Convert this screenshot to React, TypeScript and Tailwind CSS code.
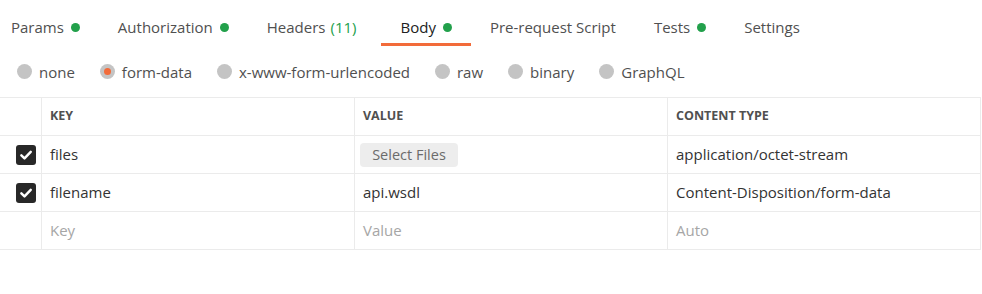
import React from "react";

const tabs = [
  { label: "Params", dot: true },
  { label: "Authorization", dot: true },
  { label: "Headers", count: "(11)" },
  { label: "Body", dot: true, active: true },
  { label: "Pre-request Script" },
  { label: "Tests", dot: true },
  { label: "Settings" },
];

const bodyTypes = ["none", "form-data", "x-www-form-urlencoded", "raw", "binary", "GraphQL"];

function Checkbox() {
  return (
    <div className="w-[20px] h-[20px] rounded-[3px] bg-[#282828] flex items-center justify-center">
      <svg width="14" height="14" viewBox="0 0 13 13" fill="none">
        <path d="M2.2 6.8l2.9 2.8L10.9 3.6" stroke="#fff" strokeWidth="2.3" strokeLinecap="round" strokeLinejoin="round" />
      </svg>
    </div>
  );
}

function Cell({ children, first }: { children?: React.ReactNode; first?: boolean }) {
  return (
    <div
      className={`h-[38px] border-b border-r border-[#ebebeb] flex items-center ${
        first ? "pl-[16px]" : "px-[8px]"
      }`}
    >
      {children}
    </div>
  );
}

function Head({ children }: { children: React.ReactNode }) {
  return <span className="text-[12.5px] font-bold text-[#505050]">{children}</span>;
}

export default function App() {
  return (
    <div className="w-[982px] h-[294px] bg-white text-[15px] text-[#505050]" style={{ fontFamily: '"Open Sans", sans-serif' }}>
      <div className="flex h-[46px]">
        {tabs.map((t, i) => (
          <div
            key={t.label}
            className={`h-[46px] pt-[16px] border-b-[3px] flex items-start leading-[22px] ${
              i === 0 ? "pl-[11px] pr-[19px]" : "px-[19px]"
            } ${t.active ? "border-[#f26b3a] text-[#212121]" : "border-transparent"} ${t.count ? "pr-[25px]" : ""}`}
          >
            <span>{t.label}</span>
            {t.count && <span className="ml-[5px] text-[#22a04b]">{t.count}</span>}
            {t.dot && <span className="ml-[7px] mt-[7px] w-[9px] h-[9px] rounded-full bg-[#22a04b]" />}
          </div>
        ))}
      </div>

      <div className="h-[51px] flex items-center pl-[17px] gap-[25px]">
        {bodyTypes.map((b) => (
          <div key={b} className="flex items-center gap-[7px] leading-[22px]">
            <span className="w-[15px] h-[15px] rounded-full bg-[#c4c4c4] flex items-center justify-center">
              {b === "form-data" && <span className="w-[7px] h-[7px] rounded-full bg-[#f26b3a]" />}
            </span>
            <span>{b}</span>
          </div>
        ))}
      </div>

      <div className="grid grid-cols-[42px_313px_313px_313px] border-t border-[#ebebeb] w-[981px] text-[#333]">
        <Cell first />
        <Cell>
          <Head>KEY</Head>
        </Cell>
        <Cell>
          <Head>VALUE</Head>
        </Cell>
        <Cell>
          <Head>CONTENT TYPE</Head>
        </Cell>

        <Cell first>
          <Checkbox />
        </Cell>
        <Cell>files</Cell>
        <Cell>
          <button className="ml-[-3px] w-[98px] h-[24px] rounded-[4px] bg-[#ededed] text-[#6b6b6b] text-[14.5px] leading-[24px]">
            Select Files
          </button>
        </Cell>
        <Cell>application/octet-stream</Cell>

        <Cell first>
          <Checkbox />
        </Cell>
        <Cell>filename</Cell>
        <Cell>api.wsdl</Cell>
        <Cell>Content-Disposition/form-data</Cell>

        <Cell first />
        <Cell>
          <span className="text-[#a6a6a6]">Key</span>
        </Cell>
        <Cell>
          <span className="text-[#a6a6a6]">Value</span>
        </Cell>
        <Cell>
          <span className="text-[#a6a6a6]">Auto</span>
        </Cell>
      </div>
    </div>
  );
}
